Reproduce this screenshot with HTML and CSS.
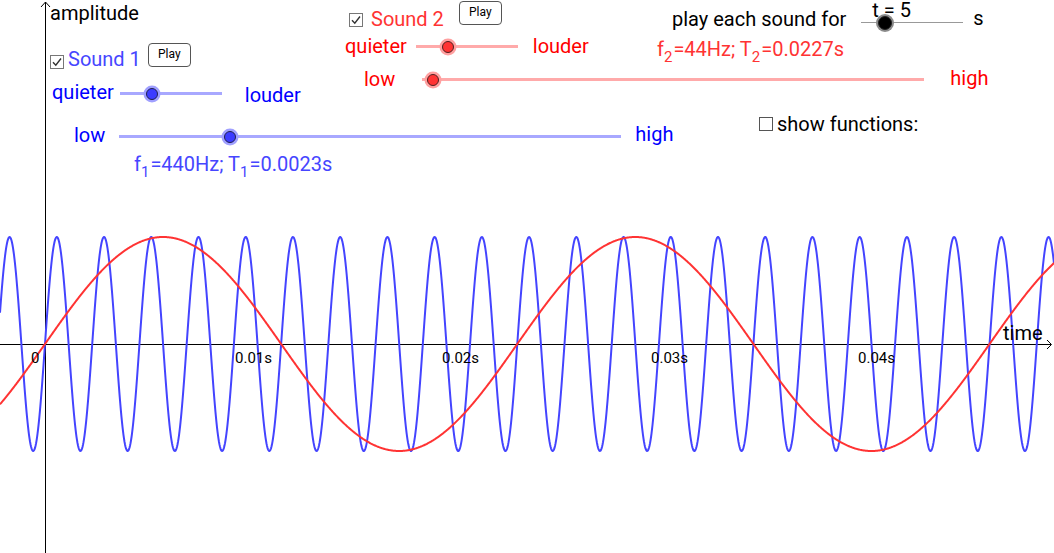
FILE: index.html
```html
<!DOCTYPE html>
<html lang="en">
<head>
<meta charset="utf-8">
<title>Sound waves</title>
<link rel="stylesheet" href="styles.css">
</head>
<body>
<div class="applet">
  <svg class="graph" width="1054" height="553" viewBox="0 0 1054 553">
    <line class="axis" x1="0" y1="344.5" x2="1051" y2="344.5"/>
    <polyline class="axis" points="1047,340 1051.5,344.5 1047,349"/>
    <line class="axis" x1="45.5" y1="2" x2="45.5" y2="553"/>
    <polyline class="axis" points="41,7 45.5,2 50,7"/>
    <path id="wave1" class="wave wave-blue" d=""/>
    <path id="wave2" class="wave wave-red" d=""/>
    <text class="tick" x="31" y="363">0</text>
    <text class="tick" x="235" y="363">0.01s</text>
    <text class="tick" x="442" y="363">0.02s</text>
    <text class="tick" x="651" y="363">0.03s</text>
    <text class="tick" x="858" y="363">0.04s</text>
    <text class="axis-name" x="1003" y="340">time</text>
  </svg>

  <div class="label amp-label">amplitude</div>

  <!-- Sound 1 -->
  <div class="head head-1">
    <span class="check"><svg width="14" height="14" viewBox="0 0 14 14"><rect x="0.5" y="0.5" width="13" height="13" fill="#fff" stroke="#777"/><path d="M3 7.2 L5.8 10.2 L11 3.5" fill="none" stroke="#333" stroke-width="1.4"/></svg></span>
    <span class="label c-blue2">Sound 1</span>
    <button class="play play-1">Play</button>
  </div>
  <div class="row row-vol1">
    <span class="label c-blue">quieter</span>
    <div class="slider slider-short blue"><div class="track"></div><div class="knob" style="left:32px"></div></div>
    <span class="label c-blue louder-1">louder</span>
  </div>
  <div class="row row-freq1">
    <span class="label c-blue">low</span>
    <div class="slider slider-long blue"><div class="track"></div><div class="knob" style="left:111px"></div></div>
    <span class="label c-blue">high</span>
  </div>
  <div class="label formula f1 c-blue2">f<sub>1</sub>=440Hz; T<sub>1</sub>=0.0023s</div>

  <!-- Sound 2 -->
  <div class="head head-2">
    <span class="check"><svg width="14" height="14" viewBox="0 0 14 14"><rect x="0.5" y="0.5" width="13" height="13" fill="#fff" stroke="#777"/><path d="M3 7.2 L5.8 10.2 L11 3.5" fill="none" stroke="#333" stroke-width="1.4"/></svg></span>
    <span class="label c-red2">Sound 2</span>
    <button class="play play-2">Play</button>
  </div>
  <div class="row row-vol2">
    <span class="label c-red">quieter</span>
    <div class="slider slider-short red"><div class="track"></div><div class="knob" style="left:32px"></div></div>
    <span class="label c-red">louder</span>
  </div>
  <div class="row row-freq2">
    <span class="label c-red">low</span>
    <div class="slider slider-long red"><div class="track"></div><div class="knob" style="left:11px"></div></div>
    <span class="label c-red">high</span>
  </div>
  <div class="label formula f2 c-red2">f<sub>2</sub>=44Hz; T<sub>2</sub>=0.0227s</div>

  <!-- duration -->
  <div class="row row-time">
    <span class="label">play each sound for</span>
    <div class="slider slider-short gray">
      <span class="label t-value">t = 5</span>
      <div class="track"></div><div class="knob" style="left:24px"></div>
    </div>
    <span class="label">s</span>
  </div>

  <div class="row row-show">
    <span class="check"><svg width="15" height="14" viewBox="0 0 15 14"><rect x="0.5" y="0.5" width="13" height="13" fill="#fff" stroke="#555"/></svg></span>
    <span class="label">show functions:</span>
  </div>
</div>
<script src="script.js"></script>
</body>
</html>
```

FILE: styles.css
```css
html, body {
  margin: 0;
  padding: 0;
  background: #fff;
}

.applet {
  position: relative;
  width: 1054px;
  height: 553px;
  overflow: hidden;
  font-family: Roboto, "Liberation Sans", sans-serif;
  color: #000;
}

.graph {
  display: block;
}

.axis {
  stroke: #000;
  stroke-width: 1;
  fill: none;
}

.wave {
  fill: none;
  stroke-width: 2;
  stroke-linejoin: round;
}

.wave-blue { stroke: #4444ff; }
.wave-red { stroke: #ff3333; }

.tick {
  font-family: Roboto, "Liberation Sans", sans-serif;
  font-size: 15px;
  fill: #000;
}

.axis-name {
  font-family: Roboto, "Liberation Sans", sans-serif;
  font-size: 20px;
  fill: #000;
}

.label {
  font-size: 20px;
  line-height: 20px;
  white-space: nowrap;
}

.c-blue { color: #0000ff; }
.c-blue2 { color: #4646ff; }
.c-red { color: #ff0000; }
.c-red2 { color: #ff3333; }

/* canvas-placed widgets */
.amp-label, .head, .row, .formula {
  position: absolute;
}

.amp-label { left: 50px; top: 3px; }

.head {
  display: flex;
  align-items: flex-start;
}

.check {
  display: block;
  width: 14px;
  height: 14px;
}
.check svg { display: block; }

.head-1 { left: 50px; top: 43px; }
.head-1 .check { margin-top: 12px; }
.head-1 .label { margin-left: 4px; margin-top: 6px; }
.head-1 .play { margin-left: 7px; }

.head-2 { left: 349px; top: 1px; }
.head-2 .check { margin-top: 12px; }
.head-2 .label { margin-left: 8px; margin-top: 8px; }
.head-2 .play { margin-left: 15px; }

.play {
  box-sizing: border-box;
  width: 43px;
  height: 24px;
  padding: 3px 0 0;
  margin: 0;
  border: 1.5px solid #555;
  border-radius: 4px;
  background: #fff;
  font-family: Roboto, "Liberation Sans", sans-serif;
  font-size: 12px;
  line-height: 14px;
  color: #000;
  display: flex;
  justify-content: center;
  align-items: flex-start;
}

.row {
  display: flex;
  align-items: flex-start;
}

.slider {
  position: relative;
  height: 20px;
}
.slider-short { width: 102px; }
.slider-long { width: 502px; }

.track {
  margin-top: 9px;
  height: 3px;
}
.knob {
  position: absolute;
  top: 10.5px;
  width: 10px;
  height: 10px;
  border-radius: 50%;
  transform: translate(-50%, -50%);
}

.blue .track { background: #a8a8ff; }
.blue .knob {
  background: #3c3cff;
  border: 1px solid #202050;
  box-shadow: 0 0 0 2.5px #a0a0ff;
}
.red .track { background: #ffaaaa; }
.red .knob {
  background: #ff3333;
  border: 1px solid #502020;
  box-shadow: 0 0 0 2.5px #ffa0a0;
}
.gray .track {
  background: #999;
  height: 1px;
  margin-top: 12px;
}
.gray .knob {
  top: 13px;
  width: 12px;
  height: 12px;
  background: #000;
  border: 1px solid #222;
  box-shadow: 0 0 0 2px #8a8a8a;
}

.t-value {
  position: absolute;
  left: 11px;
  top: -10px;
}

.row-vol1 { left: 52px; top: 82px; }
.row-vol1 .slider { margin-left: 6px; margin-top: 1px; }
.row-vol1 .louder-1 { margin-left: 23px; margin-top: 3px; }

.row-freq1 { left: 74px; top: 125px; }
.row-freq1 .slider { margin-left: 14px; margin-top: 1px; }
.row-freq1 .label:last-child { margin-left: 14px; margin-top: -1px; }

.f1 { left: 134px; top: 154px; }
.f2 { left: 657px; top: 39px; }

.formula sub {
  font-size: 15px;
  line-height: 0;
  vertical-align: -6px;
  margin: 0 1px 0 0;
}

.row-vol2 { left: 345px; top: 36px; }
.row-vol2 .slider { margin-left: 9px; margin-top: 0px; }
.row-vol2 .label:last-child { margin-left: 15px; }

.row-freq2 { left: 364px; top: 69px; }
.row-freq2 .slider { margin-left: 27px; margin-top: 0px; }
.row-freq2 .label:last-child { margin-left: 26px; margin-top: -1px; }

.row-time { left: 672px; top: 9px; }
.row-time .slider { margin-left: 15px; margin-top: 1px; height: 24px; }
.row-time .label:last-child { margin-left: 10px; margin-top: -1px; }

.row-show { left: 759px; top: 114px; }
.row-show .check { margin-top: 3px; }
.row-show .label { margin-left: 4px; }
```

FILE: script.js
```js
(function () {
  var X0 = 45, Y0 = 344, S = 20780, A = 107;
  function wave(f) {
    var d = '';
    for (var x = 0; x <= 1054; x += 0.5) {
      var t = (x - X0) / S;
      var y = Y0 - A * Math.sin(2 * Math.PI * f * t);
      d += (x === 0 ? 'M' : 'L') + x + ' ' + y.toFixed(2);
    }
    return d;
  }
  document.getElementById('wave1').setAttribute('d', wave(440));
  document.getElementById('wave2').setAttribute('d', wave(44));
})();
```
